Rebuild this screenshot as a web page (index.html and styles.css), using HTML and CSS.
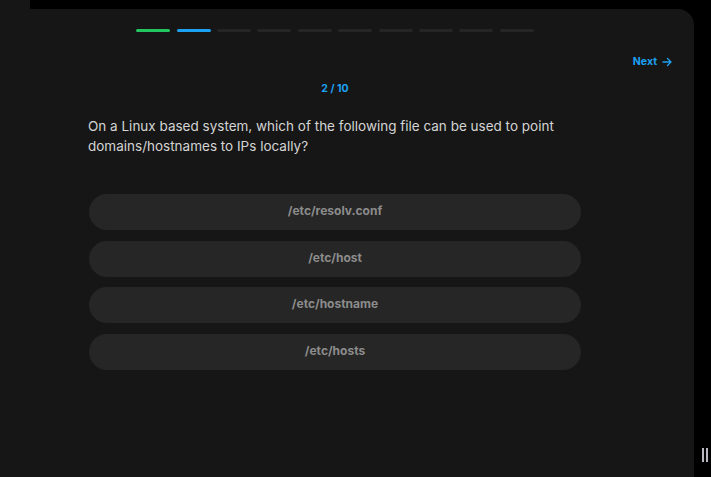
FILE: index.html
```html
<!DOCTYPE html>
<html>
<head>
<meta charset="utf-8">
<link rel="stylesheet" href="styles.css">
</head>
<body>
<div class="tab"></div>
<div class="panel">
  <div class="progress">
    <span class="seg done"></span>
    <span class="seg current"></span>
    <span class="seg"></span>
    <span class="seg"></span>
    <span class="seg"></span>
    <span class="seg"></span>
    <span class="seg"></span>
    <span class="seg"></span>
    <span class="seg"></span>
    <span class="seg"></span>
  </div>
  <div class="nav">
    <button class="next">Next
      <svg width="10" height="10" viewBox="0 0 10 10" fill="none" stroke="currentColor" stroke-width="1.3" stroke-linecap="round" stroke-linejoin="round"><path d="M1 5h8M5.5 1.5L9 5 5.5 8.5"/></svg>
    </button>
  </div>
  <div class="main">
    <div class="count">2 / 10</div>
    <p class="question">On a Linux based system, which of the following file can be used to point domains/hostnames to IPs locally?</p>
    <div class="options">
      <button class="option">/etc/resolv.conf</button>
      <button class="option">/etc/host</button>
      <button class="option">/etc/hostname</button>
      <button class="option">/etc/hosts</button>
    </div>
  </div>
</div>
<div class="handle"><span></span><span></span></div>
</body>
</html>
```
FILE: styles.css
```css
html, body {
  margin: 0;
  padding: 0;
  background: #000;
  height: 100%;
  overflow: hidden;
  font-family: Inter, "Noto Sans", sans-serif;
}
body { position: relative; }
.tab {
  width: 30px;
  height: 9px;
  background: #161616;
}
.panel {
  width: 694px;
  height: 468px;
  background: #161616;
  border-top-right-radius: 16px;
  box-sizing: border-box;
  padding-top: 20px;
}
.progress {
  width: 670px;
  display: flex;
  justify-content: center;
  gap: 6.4px;
}
.seg {
  width: 34px;
  height: 3px;
  border-radius: 2px;
  background: #252525;
}
.seg.done { background: #22c55e; }
.seg.current { background: #1da1f2; }
.nav {
  width: 672px;
  display: flex;
  justify-content: flex-end;
  margin-top: 22px;
}
.next {
  background: none;
  border: 0;
  padding: 0;
  font-family: inherit;
  font-size: 10.5px;
  font-weight: 700;
  line-height: 16px;
  color: #1da1f2;
  display: flex;
  align-items: center;
  gap: 5px;
}
.main {
  width: 670px;
}
.count {
  text-align: center;
  font-size: 10.5px;
  font-weight: 700;
  color: #1da1f2;
  line-height: 16px;
  margin-top: 11px;
}
.question {
  width: 492px;
  margin: 19px auto 0;
  box-sizing: border-box;
  font-size: 13.5px;
  line-height: 20px;
  color: #d4d4d4;
  position: relative;
  left: -1px;
}
.options {
  width: 492px;
  margin: 38px auto 0;
  display: flex;
  flex-direction: column;
  gap: 10.67px;
}
.option {
  height: 36px;
  border: 0;
  border-radius: 18px;
  background: #262626;
  color: #8c8c8c;
  font-family: inherit;
  font-size: 12px;
  font-weight: 700;
  line-height: 16px;
  padding: 0 0 2px;
  text-align: center;
}
.handle {
  position: absolute;
  left: 702px;
  top: 448px;
  display: flex;
  gap: 2px;
}
.handle span {
  width: 2px;
  height: 14px;
  background: #b8b8c0;
}
```
